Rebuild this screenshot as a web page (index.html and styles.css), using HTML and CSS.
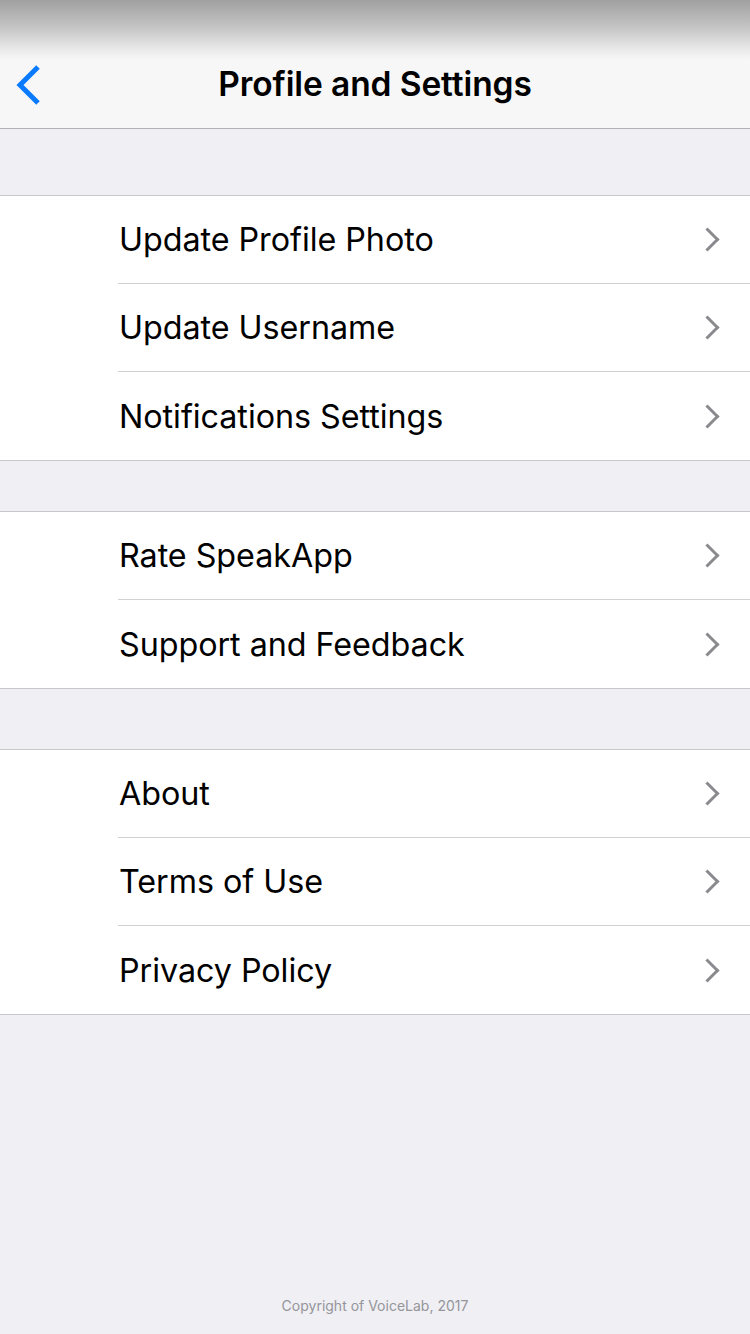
FILE: index.html
```html
<!DOCTYPE html>
<html lang="en">
<head>
<meta charset="utf-8">
<title>Profile and Settings</title>
<link rel="stylesheet" href="styles.css">
</head>
<body>
<div class="page">
  <div class="status"></div>
  <header class="navbar">
    <button class="back" aria-label="Back">
      <svg width="30" height="44" viewBox="0 0 30 44"><path d="M25 4 L7 22 L25 40" fill="none" stroke="#0a7aff" stroke-width="5" stroke-linecap="butt" stroke-linejoin="miter"/></svg>
    </button>
    <h1 class="title">Profile and Settings</h1>
  </header>

  <div class="gap gap-first"></div>
  <ul class="group">
    <li class="row"><span class="label">Update Profile Photo</span><span class="chev"></span></li>
    <li class="row"><span class="label">Update Username</span><span class="chev"></span></li>
    <li class="row"><span class="label">Notifications Settings</span><span class="chev"></span></li>
  </ul>
  <div class="gap gap-second"></div>
  <ul class="group">
    <li class="row"><span class="label">Rate SpeakApp</span><span class="chev"></span></li>
    <li class="row"><span class="label">Support and Feedback</span><span class="chev"></span></li>
  </ul>
  <div class="gap gap-third"></div>
  <ul class="group">
    <li class="row"><span class="label">About</span><span class="chev"></span></li>
    <li class="row"><span class="label">Terms of Use</span><span class="chev"></span></li>
    <li class="row"><span class="label">Privacy Policy</span><span class="chev"></span></li>
  </ul>

  <footer class="footer">Copyright of VoiceLab, 2017</footer>
</div>
</body>
</html>
```

FILE: styles.css
```css
html, body {
  margin: 0;
  padding: 0;
}
body {
  background: #efeff4;
  font-family: Inter, "Liberation Sans", Arial, sans-serif;
  color: #000;
}
.page {
  display: flex;
  flex-direction: column;
  min-height: 1334px;
}
.status {
  height: 60px;
  background: linear-gradient(to bottom, #a0a0a0 0%, #c4c4c4 45%, #ececec 85%, #f7f7f7 100%);
}
.navbar {
  height: 48px;
  padding-bottom: 20px;
  background: #f7f7f7;
  border-bottom: 1px solid #b2b2b2;
  display: flex;
  align-items: center;
  justify-content: center;
  position: relative;
}
.back {
  position: absolute;
  left: 13px;
  top: 3px;
  border: 0;
  padding: 0;
  background: none;
  width: 30px;
  height: 44px;
  display: block;
}
.back svg { display: block; }
.title {
  margin: 0;
  font-size: 33.5px;
  font-weight: 600;
  letter-spacing: -0.1px;
}
.gap-first { height: 66px; }
.gap-second { height: 50px; }
.gap-third { height: 60px; }
.group {
  list-style: none;
  margin: 0;
  padding: 0;
  background: #fff;
  border-top: 1px solid #c8c7cc;
  border-bottom: 1px solid #c8c7cc;
}
.row {
  height: 88px;
  margin-left: 118px;
  box-sizing: border-box;
  border-bottom: 1px solid #d1d1d6;
  display: flex;
  align-items: center;
  justify-content: space-between;
  padding-right: 30px;
}
.row:last-child {
  border-bottom: 0;
}
.label {
  font-size: 32.3px;
  font-weight: 400;
  letter-spacing: -0.05px;
  padding-left: 1px;
}
.chev {
  width: 14px;
  height: 14px;
  border-top: 3px solid #8a8a8e;
  border-right: 3px solid #8a8a8e;
  transform: rotate(45deg);
  margin-right: 4px;
}
.footer {
  margin-top: auto;
  text-align: center;
  font-size: 14px;
  line-height: 18px;
  color: #95959a;
  padding-bottom: 19px;
}
```
